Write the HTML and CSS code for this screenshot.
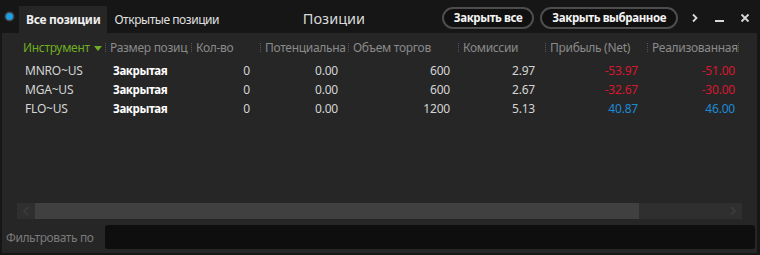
FILE: index.html
```html
<!DOCTYPE html>
<html lang="ru">
<head>
<meta charset="utf-8">
<link rel="stylesheet" href="styles.css">
</head>
<body>
<div class="window">
  <div class="topbar">
    <span class="dot"></span>
    <div class="tabs">
      <div class="tab active">Все позиции</div>
      <div class="tab">Открытые позиции</div>
    </div>
    <div class="title">Позиции</div>
    <div class="actions">
      <button class="pill">Закрыть все</button>
      <button class="pill">Закрыть выбранное</button>
    </div>
    <div class="winbtns">
      <svg width="10" height="10" viewBox="0 0 10 10"><path d="M3 1.5 L6.5 5 L3 8.5" fill="none" stroke="#d8d8d8" stroke-width="1.8"/></svg>
      <svg width="12" height="10" viewBox="0 0 12 10"><rect x="1" y="7" width="9" height="2" fill="#d8d8d8"/></svg>
      <svg width="10" height="10" viewBox="0 0 10 10"><path d="M1.5 1.5 L8.5 8.5 M8.5 1.5 L1.5 8.5" stroke="#d8d8d8" stroke-width="1.8"/></svg>
    </div>
  </div>
  <div class="panel">
    <div class="grid">
      <div class="hrow">
        <div class="hc c1 sorted">Инструмент <span class="tri"></span></div>
        <div class="hc c2">Размер позиц</div>
        <div class="hc c3">Кол-во</div>
        <div class="hc c4">Потенциальна</div>
        <div class="hc c5">Объем торгов</div>
        <div class="hc c6">Комиссии</div>
        <div class="hc c7">Прибыль (Net)</div>
        <div class="hc c8">Реализованная</div>
        <div class="hc c9"></div>
      </div>
      <div class="row">
        <div class="c c1">MNRO~US</div><div class="c c2 st">Закрытая</div><div class="c c3 n">0</div><div class="c c4 n">0.00</div><div class="c c5 n">600</div><div class="c c6 n">2.97</div><div class="c c7 n neg">-53.97</div><div class="c c8 n neg">-51.00</div>
      </div>
      <div class="row">
        <div class="c c1">MGA~US</div><div class="c c2 st">Закрытая</div><div class="c c3 n">0</div><div class="c c4 n">0.00</div><div class="c c5 n">600</div><div class="c c6 n">2.67</div><div class="c c7 n neg">-32.67</div><div class="c c8 n neg">-30.00</div>
      </div>
      <div class="row">
        <div class="c c1">FLO~US</div><div class="c c2 st">Закрытая</div><div class="c c3 n">0</div><div class="c c4 n">0.00</div><div class="c c5 n">1200</div><div class="c c6 n">5.13</div><div class="c c7 n pos">40.87</div><div class="c c8 n pos">46.00</div>
      </div>
    </div>
    <div class="hscroll">
      <div class="sbtn"><svg width="8" height="10" viewBox="0 0 8 10"><path d="M6 1 L2 5 L6 9" fill="none" stroke="#3a3a3a" stroke-width="2.2"/></svg></div>
      <div class="thumb"></div>
      <div class="track"></div>
      <div class="sbtn"><svg width="8" height="10" viewBox="0 0 8 10"><path d="M2 1 L6 5 L2 9" fill="none" stroke="#3a3a3a" stroke-width="2.2"/></svg></div>
    </div>
    <div class="filter">
      <span class="flabel">Фильтровать по</span>
      <div class="finput"></div>
    </div>
  </div>
</div>
</body>
</html>
```
FILE: styles.css
```css
* { box-sizing: border-box; }
html, body { margin: 0; padding: 0; }
body {
  width: 760px;
  height: 255px;
  background: #161616;
  font-family: "Noto Sans", "Open Sans", sans-serif;
  font-size: 12px;
  color: #d0d0d0;
  overflow: hidden;
}
.window {
  height: 255px;
  display: flex;
  flex-direction: column;
}
.topbar {
  height: 33px;
  display: flex;
  align-items: flex-end;
  flex: none;
}
.dot {
  width: 7px;
  height: 7px;
  border-radius: 50%;
  background: #1aa0e8;
  box-shadow: 0 0 0 1.5px #454545;
  margin: 0 6px 13px 6px;
  flex: none;
}
.tabs {
  display: flex;
  height: 27px;
}
.tab {
  padding: 0 7px;
  height: 27px;
  line-height: 28px;
  font-size: 12px;
  letter-spacing: -0.45px;
  color: #e0e0e0;
}
.tab.active {
  background: #262626;
  font-weight: bold;
  letter-spacing: -0.3px;
  color: #f0f0f0;
}
.title {
  flex: 1;
  text-align: center;
  font-size: 14.5px;
  color: #d8d8d8;
  line-height: 36px;
  align-self: stretch;
}
.actions {
  display: flex;
  gap: 6px;
  align-self: center;
  margin-top: 2px;
}
.pill {
  height: 22px;
  padding: 0 10px;
  border: 2px solid #4d4d4d;
  border-radius: 11px;
  background: #101010;
  color: #f4f4f4;
  font-family: inherit;
  font-size: 11.5px;
  letter-spacing: -0.4px;
  font-weight: bold;
  line-height: 17px;
}
.winbtns {
  display: flex;
  align-items: center;
  gap: 14px;
  align-self: center;
  margin: 2px 10px 0 12px;
}
.panel {
  flex: 1;
  margin: 0 3px 2px 2px;
  background: #262626;
  display: flex;
  flex-direction: column;
}
.grid {
  padding-left: 16px;
}
.hrow, .row {
  display: flex;
}
.hrow { height: 28px; align-items: center; }
.row { height: 19px; align-items: center; }
.c1 { width: 87px; }
.c2 { width: 86px; }
.c3 { width: 69px; }
.c4 { width: 88px; }
.c5 { width: 110px; }
.c6 { width: 87px; }
.c7 { width: 102px; }
.c8 { width: 91px; }
.c9 { width: 4px; height: 16px; }
.hc {
  position: relative;
  white-space: nowrap;
  overflow: hidden;
  color: #8a8a8a;
  font-size: 12px;
  letter-spacing: -0.3px;
  padding-left: 5px;
}
.hc::before {
  content: "";
  position: absolute;
  left: 0;
  top: 4px;
  height: 9px;
  border-left: 1px dotted #555;
}
.hc.c1::before { display: none; }
.sorted { color: #6fae22; }
.tri {
  display: inline-block;
  width: 0;
  height: 0;
  border-left: 4px solid transparent;
  border-right: 4px solid transparent;
  border-top: 5px solid #6fae22;
  vertical-align: middle;
  margin-left: 1px;
}
.c {
  white-space: nowrap;
  overflow: hidden;
  color: #d4d4d4;
  letter-spacing: -0.2px;
}
.row .c1 { padding-left: 7px; }
.row .c2 { padding-left: 8px; }
.st { color: #ffffff; font-weight: bold; font-size: 11.5px; letter-spacing: -0.4px; }
.n { text-align: right; padding-right: 10px; }
.row .c5 { padding-right: 8px; }
.row .c7 { padding-right: 9px; }
.row .c8 { padding-right: 3px; }
.neg { color: #d8172f; }
.pos { color: #1c8ad6; }
.hscroll {
  margin: auto 15px 0 15px;
  height: 16px;
  display: flex;
}
.sbtn {
  width: 18px;
  background: #2f2f2f;
  display: flex;
  align-items: center;
  justify-content: center;
}
.thumb {
  width: 604px;
  background: #404040;
}
.track {
  flex: 1;
  background: #2f2f2f;
}
.filter {
  display: flex;
  align-items: center;
  margin: 6px 0 4px 0;
  height: 24px;
}
.flabel {
  width: 103px;
  padding-left: 4px;
  color: #7a7a7a;
  font-size: 12px;
  letter-spacing: -0.4px;
}
.finput {
  flex: 1;
  height: 24px;
  margin-right: 2px;
  background: #0e0e0e;
  border-radius: 3px;
}
```
